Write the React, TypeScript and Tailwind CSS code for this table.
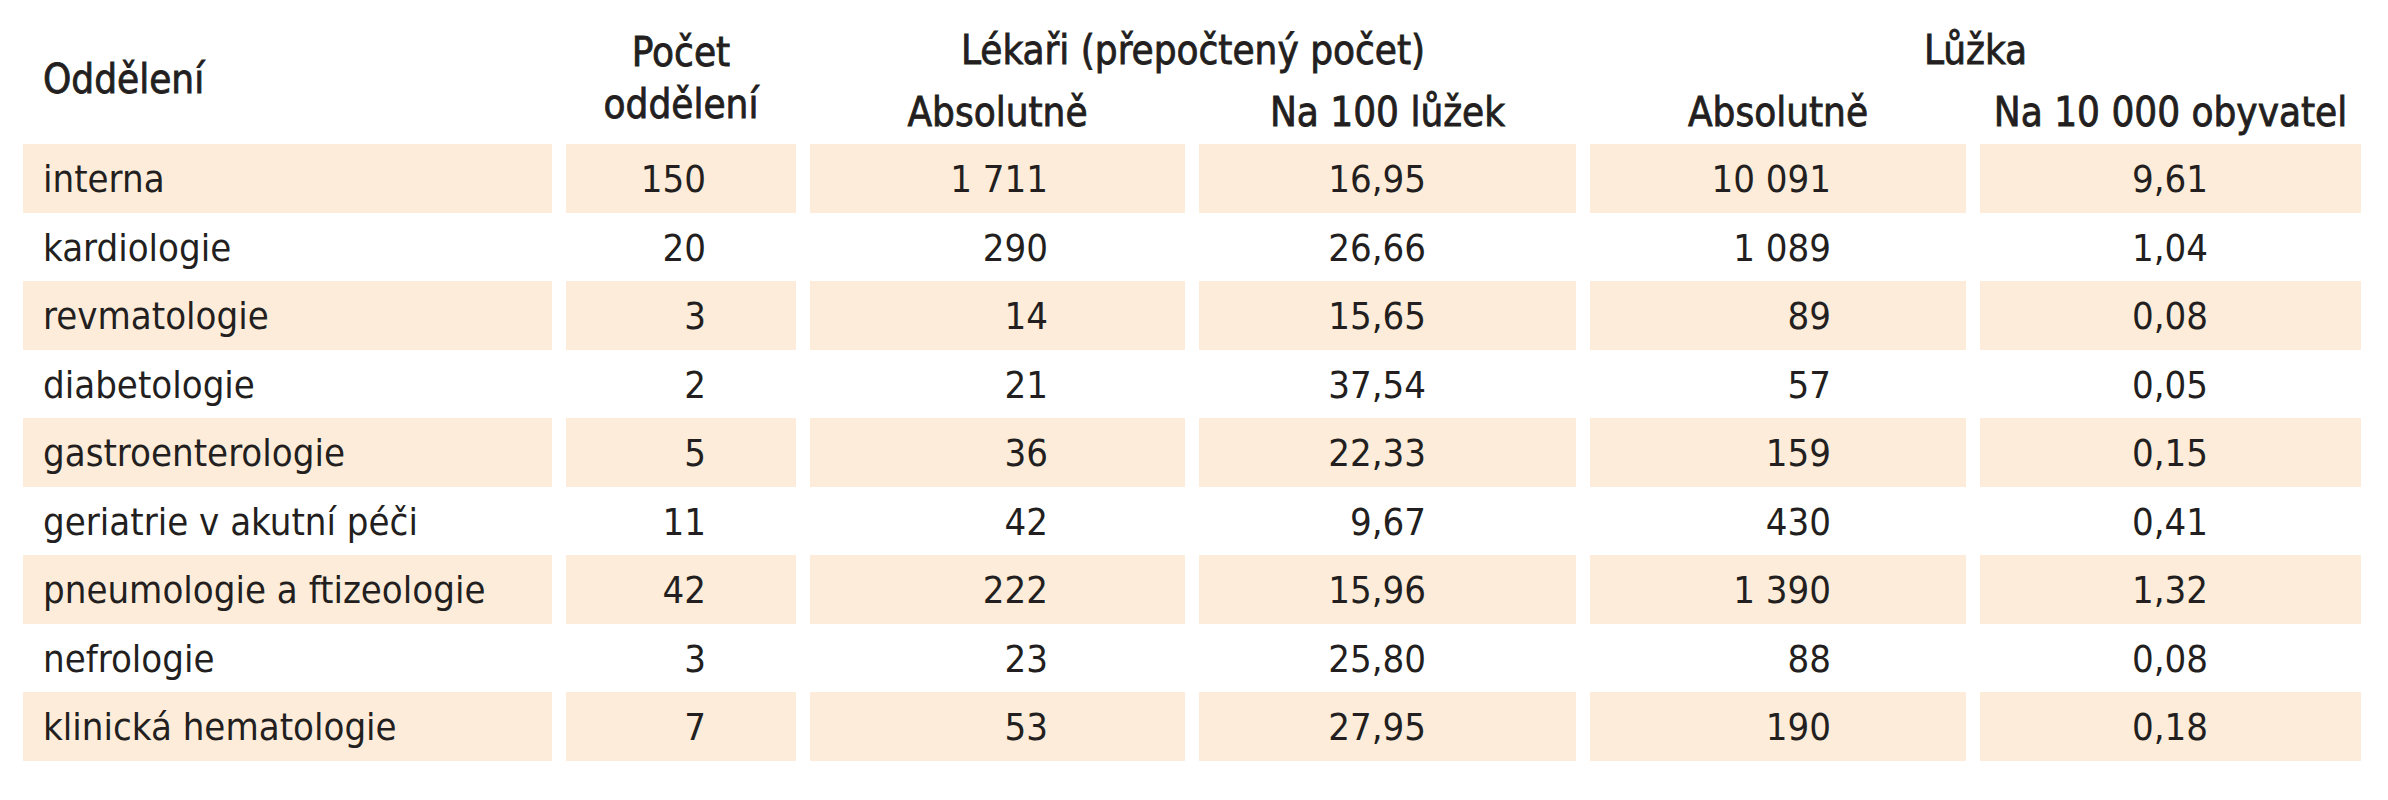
const rows: [string, string, string, string, string, string][] = [
  ["interna", "150", "1 711", "16,95", "10 091", "9,61"],
  ["kardiologie", "20", "290", "26,66", "1 089", "1,04"],
  ["revmatologie", "3", "14", "15,65", "89", "0,08"],
  ["diabetologie", "2", "21", "37,54", "57", "0,05"],
  ["gastroenterologie", "5", "36", "22,33", "159", "0,15"],
  ["geriatrie v akutní péči", "11", "42", "9,67", "430", "0,41"],
  ["pneumologie a ftizeologie", "42", "222", "15,96", "1 390", "1,32"],
  ["nefrologie", "3", "23", "25,80", "88", "0,08"],
  ["klinická hematologie", "7", "53", "27,95", "190", "0,18"],
];

/* right padding of each number column, so the figures line up */
const numPad = ["pr-[90px]", "pr-[137px]", "pr-[150px]", "pr-[135px]", "pr-[153px]"];

export default function App() {
  return (
    <div className="w-[2388px] h-[800px] bg-white text-[#231f20] font-['DejaVu_Sans_Condensed','DejaVu_Sans',sans-serif]">
      <div className="ml-[23px] grid grid-cols-[529px_230px_375px_377px_376px_381px] gap-x-[14px]">
        {/* HEADER */}
        <div className="row-span-2 h-[144px] pt-[57px] pl-[20px] text-[40px] leading-[44px] [-webkit-text-stroke:0.8px_#231f20]">
          Oddělení
        </div>
        <div className="row-span-2 h-[144px] pt-[26px] text-center text-[40px] leading-[52px] [-webkit-text-stroke:0.8px_#231f20]">
          Počet
          <br />
          oddělení
        </div>
        <div className="col-span-2 h-[72px] pt-[28px] text-center text-[40px] leading-[44px] [-webkit-text-stroke:0.8px_#231f20]">
          Lékaři (přepočtený počet)
        </div>
        <div className="col-span-2 h-[72px] pt-[28px] text-center text-[40px] leading-[44px] [-webkit-text-stroke:0.8px_#231f20]">
          Lůžka
        </div>
        <HeadCell>Absolutně</HeadCell>
        <HeadCell>Na 100 lůžek</HeadCell>
        <HeadCell>Absolutně</HeadCell>
        <HeadCell>Na 10 000 obyvatel</HeadCell>

        {/* BODY */}
        {rows.map((r, i) => {
          const band = i % 2 === 0 ? "bg-[#fdecda]" : "bg-white";
          return <Row key={r[0]} cells={r} band={band} />;
        })}
      </div>
    </div>
  );
}

function HeadCell({ children }: { children: React.ReactNode }) {
  return (
    <div className="h-[72px] pt-[18px] text-center text-[40px] leading-[44px] whitespace-nowrap [-webkit-text-stroke:0.8px_#231f20]">
      {children}
    </div>
  );
}

function Row({ cells, band }: { cells: string[]; band: string }) {
  return (
    <>
      <div className={`${band} h-[68.5px] pt-[2px] pl-[20px] text-[38px] leading-[66px] whitespace-nowrap`}>
        {cells[0]}
      </div>
      {cells.slice(1).map((c, j) => (
        <div
          key={j}
          className={`${band} ${numPad[j]} h-[68.5px] pt-[2px] text-right text-[38px] leading-[66px] whitespace-nowrap`}
        >
          {c}
        </div>
      ))}
    </>
  );
}
